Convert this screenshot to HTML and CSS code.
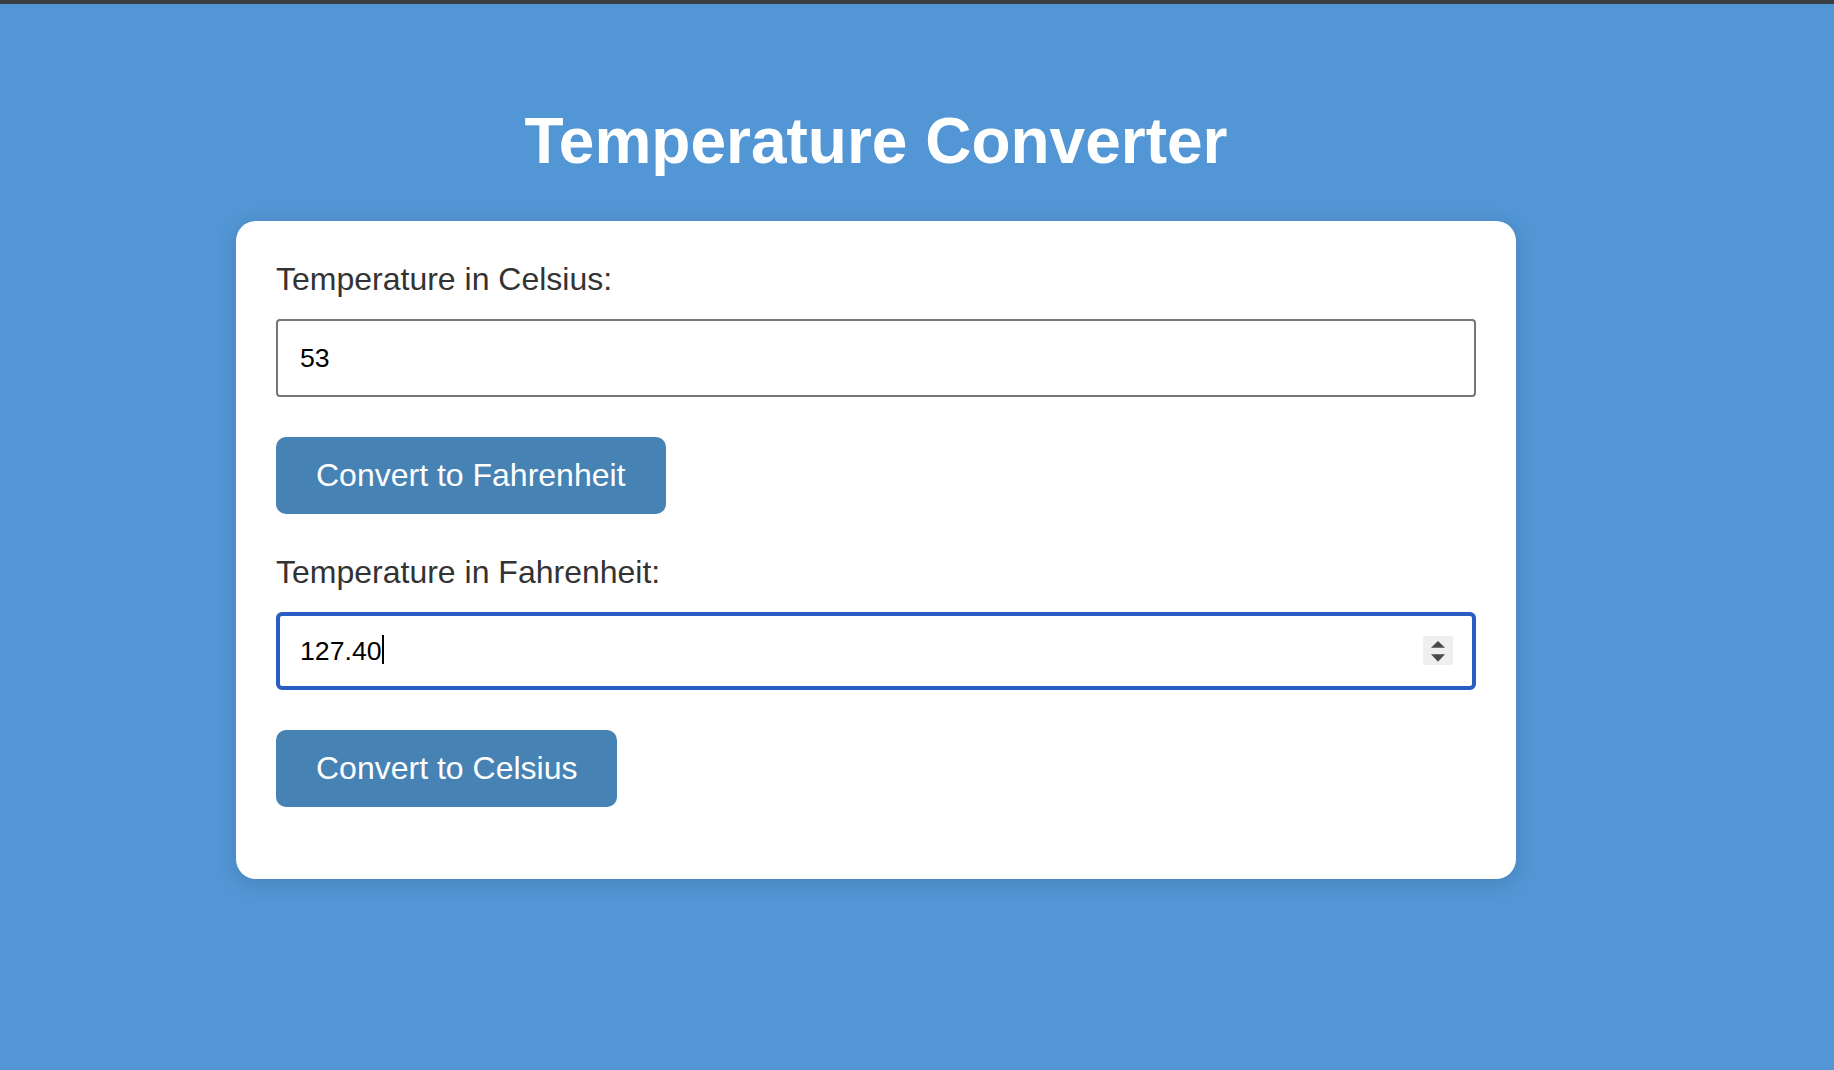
FILE: index.html
```html
<!DOCTYPE html>
<html lang="en">
<head>
<meta charset="utf-8">
<title>Temperature Converter</title>
<link rel="stylesheet" href="styles.css">
</head>
<body>
<div class="topbar"></div>
<main class="page">
  <div class="container">
    <h1 class="title">Temperature Converter</h1>
    <div class="card">
      <label class="label" for="celsius">Temperature in Celsius:</label>
      <input class="field" id="celsius" type="text" value="53">
      <button class="btn" type="button">Convert to Fahrenheit</button>
      <label class="label label-next" for="fahrenheit">Temperature in Fahrenheit:</label>
      <div class="field-wrap">
        <input class="field field-focus" id="fahrenheit" type="text" value="127.40">
        <span class="caret"></span>
        <svg class="spinner" viewBox="0 0 30 29" width="30" height="29" aria-hidden="true">
          <rect x="0" y="0" width="30" height="29" rx="2" fill="#efefef"/>
          <polygon points="15,5 22,11.7 8,11.7" fill="#4a4a4a"/>
          <polygon points="8,18.3 22,18.3 15,25.7" fill="#4a4a4a"/>
        </svg>
      </div>
      <button class="btn" type="button">Convert to Celsius</button>
    </div>
  </div>
</main>
</body>
</html>
```

FILE: styles.css
```css
html, body {
  margin: 0;
  padding: 0;
}

body {
  background: #5296d5;
  font-family: "Liberation Sans", Arial, Helvetica, sans-serif;
  min-height: 1070px;
}

.topbar {
  height: 4px;
  background: #3b3e43;
}

.page {
  padding: 100px 0 0 236px;
}

.container {
  width: 1280px;
}

.title {
  margin: 0 0 43px 0;
  font-size: 64px;
  line-height: 74px;
  font-weight: bold;
  color: #ffffff;
  text-align: center;
}

.card {
  background: #ffffff;
  border-radius: 20px;
  padding: 40px 40px 72px 40px;
  box-shadow: 0 4px 20px rgba(0, 0, 0, 0.14);
}

.label {
  display: block;
  font-size: 32px;
  line-height: 37px;
  color: #333333;
  margin-bottom: 21px;
}

.label-next {
  margin-top: 40px;
}

.field {
  display: block;
  width: 100%;
  height: 78px;
  box-sizing: border-box;
  border: 2px solid #767676;
  border-radius: 4px;
  padding: 0 22px;
  font-family: "Liberation Sans", Arial, Helvetica, sans-serif;
  font-size: 26.67px;
  color: #000000;
  background: #ffffff;
  margin: 0 0 40px 0;
  outline: none;
}

.field-wrap {
  position: relative;
  margin-bottom: 40px;
}

.field-wrap .field {
  margin-bottom: 0;
}

.field-focus {
  border: 4px solid #2a5dc4;
  border-radius: 6px;
  padding: 0 20px;
  caret-color: transparent;
}

.caret {
  position: absolute;
  left: 106px;
  top: 23px;
  width: 2px;
  height: 29px;
  background: #000000;
}

.spinner {
  position: absolute;
  right: 23px;
  top: 24px;
  display: block;
}

.btn {
  display: block;
  border: 0;
  border-radius: 10px;
  background: #4682b4;
  color: #ffffff;
  font-family: "Liberation Sans", Arial, Helvetica, sans-serif;
  font-size: 32px;
  line-height: 37px;
  padding: 20px 40px;
  cursor: pointer;
}
```
